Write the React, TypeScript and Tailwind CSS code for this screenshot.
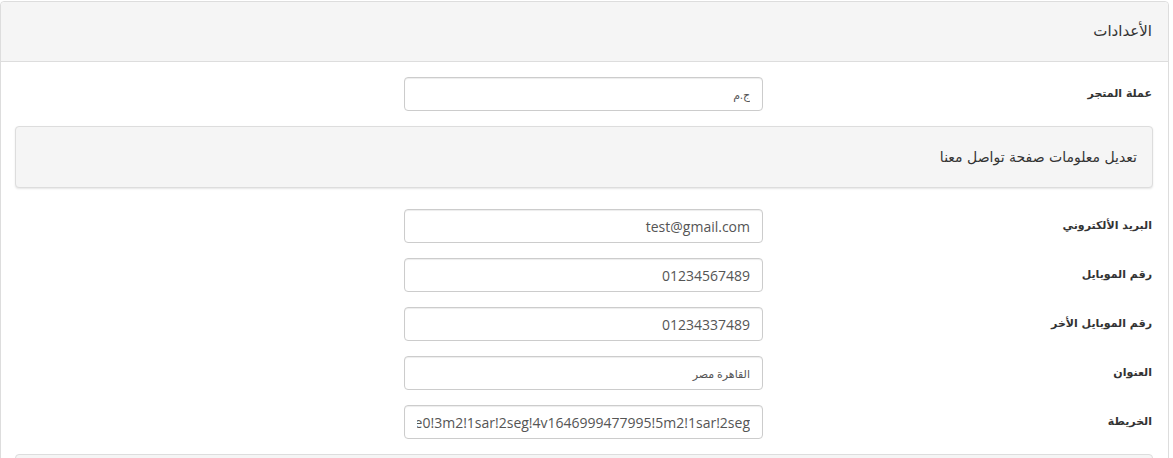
import React from "react";

const MAP_URL =
  "https://www.google.com/maps/embed?pb=!1m18!1m12!1m3!1d3453.0!2d31.2!3d30.0!2m3!1f0!2f0!3f0!3m2!1i1024!2i768!4f13.1!3m3!1m2!1s0x0%3A0x0!2zMzDCsDAz!5e0!3m2!1sar!2seg!4v1646999477995!5m2!1sar!2seg";

interface Field {
  label: string;
  value: string;
  small?: boolean;
}

const contactFields: Field[] = [
  { label: "البريد الألكتروني", value: "test@gmail.com" },
  { label: "رقم الموبايل", value: "01234567489" },
  { label: "رقم الموبايل الأخر", value: "01234337489" },
  { label: "العنوان", value: "القاهرة مصر", small: true },
  { label: "الخريطة", value: MAP_URL },
];

function FormRow({ label, value, small }: Field) {
  return (
    <div className="flex items-start mb-[15px]">
      <label className="w-[390px] shrink-0 pt-[8px] pr-[1px] text-right text-[11px] font-bold text-[#333] leading-[17px]">
        {label}
      </label>
      <input
        readOnly
        dir="rtl"
        defaultValue={value}
        className={`w-[359px] h-[34px] px-[12px] border border-[#ccc] rounded-[4px] bg-white text-[#555] outline-none shadow-[inset_0_1px_1px_rgba(0,0,0,0.075)] ${
          small ? "text-[11px]" : "text-[14px]"
        }`}
        style={{ fontFamily: '"Open Sans", "DejaVu Sans", sans-serif' }}
      />
    </div>
  );
}

export default function App() {
  return (
    <div
      dir="rtl"
      className="w-[1173px] h-[458px] overflow-hidden bg-white"
      style={{ fontFamily: '"DejaVu Sans", "Liberation Sans", sans-serif' }}
    >
      <div className="w-[1169px] -ml-[1px] mt-[1px] mr-[4px] border border-[#ddd] rounded-t-[4px] bg-white">
        <div className="h-[60px] flex items-center pr-[16px] bg-[#f5f5f5] border-b border-[#ddd] rounded-t-[4px]">
          <h3 className="text-[15px] text-[#333]">الأعدادات</h3>
        </div>
        <div className="px-[15px] pt-[15px]">
          <FormRow label="عملة المتجر" value="ج.م" small />
          <div className="h-[62px] -ml-[1px] mb-[21px] flex items-center pr-[15px] bg-[#f5f5f5] border border-[#ddd] rounded-[4px] shadow-[0_1px_2px_rgba(0,0,0,0.1)]">
            <h4 className="text-[14px] text-[#333]">تعديل معلومات صفحة تواصل معنا</h4>
          </div>
          {contactFields.map((f) => (
            <FormRow key={f.label} {...f} />
          ))}
          <div className="h-[40px] -ml-[1px] mt-[1px] bg-[#f5f5f5] border border-[#ddd] rounded-[4px]" />
        </div>
      </div>
    </div>
  );
}
